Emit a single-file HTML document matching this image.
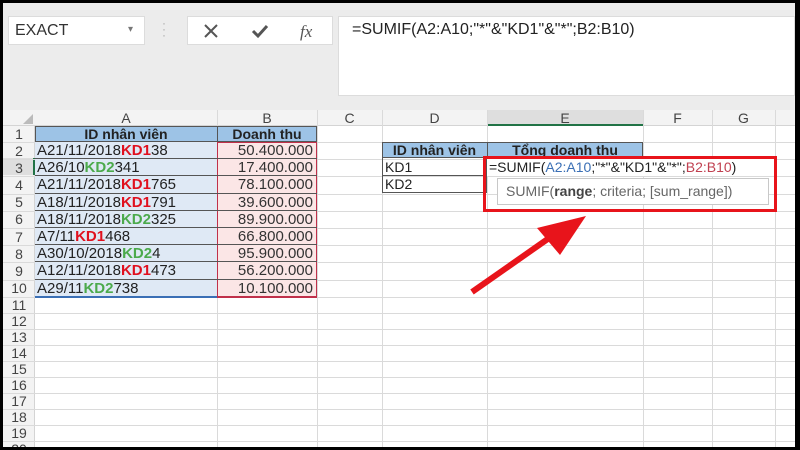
<!DOCTYPE html>
<html><head><meta charset="utf-8"><style>
*{margin:0;padding:0;box-sizing:border-box}
html,body{width:800px;height:450px;overflow:hidden}
body{background:#000;font-family:"Liberation Sans",Arial,sans-serif;position:relative}
#wrap{position:absolute;left:0;top:0;width:800px;height:450px;overflow:hidden}
.a{position:absolute}
.t{position:absolute;font-size:14px;line-height:16px;white-space:nowrap;color:#222}
.r{color:#e0101e;font-weight:bold}.g{color:#4caa4c;font-weight:bold}
</style></head><body><div id="wrap">
<div class="a" style="left:3px;top:3px;width:792px;height:444px;background:#fff"></div>
<div class="a" style="left:3px;top:3px;width:792px;height:107px;background:#ececec"></div>
<div class="a" style="left:8px;top:16px;width:137px;height:29px;background:#fff;border:1px solid #dcdcdc"></div>
<div class="t" style="left:15px;top:23px;font-size:16px;color:#333">EXACT</div>
<div class="t" style="left:128px;top:22px;font-size:10px;color:#777">▾</div>
<div class="t" style="left:162px;top:20px;font-size:12px;color:#aaa;line-height:6px">·<br>·<br>·</div>
<div class="a" style="left:187px;top:16px;width:146px;height:29px;background:#fff;border:1px solid #dcdcdc"></div>
<svg class="a" style="left:200px;top:21px" width="130" height="20"><path d="M5 4 L17 16 M17 4 L5 16" stroke="#555" stroke-width="2"/><path d="M53 10 L58 15 L67 5" stroke="#555" stroke-width="3" fill="none"/><text x="100" y="16" font-family="Liberation Serif" font-style="italic" font-size="17" fill="#555">fx</text></svg>
<div class="a" style="left:338px;top:16px;width:457px;height:80px;background:#fff;border:1px solid #dcdcdc"></div>
<div class="t" style="left:352px;top:22px;font-size:16px;color:#222">=SUMIF(A2:A10;"*"&amp;"KD1"&amp;"*";B2:B10)</div>
<div class="a" style="left:3px;top:110px;width:792px;height:16px;background:#f3f3f3;border-bottom:1px solid #d4d4d4"></div>
<div class="a" style="left:487px;top:110px;width:156px;height:16px;background:#dedede;border-bottom:2px solid #217346"></div>
<svg class="a" style="left:22px;top:113px" width="12" height="12"><path d="M11 1 L11 11 L1 11Z" fill="#bbb"/></svg>
<div id="cols"></div>
<div class="a" style="left:3px;top:126px;width:32px;height:321px;background:#f3f3f3;border-right:1px solid #d4d4d4"></div>
<div class="a" style="left:3px;top:158px;width:32px;height:17px;background:#dedede;border-right:2px solid #217346"></div>
<div id="grid"></div>
<div class="a" style="left:35px;top:126px;width:282px;height:16px;background:#9dc3e6;border:1px solid #555"></div>
<div class="a" style="left:217px;top:126px;width:1px;height:16px;background:#555"></div>
<div class="t" style="left:35px;top:126px;width:182px;text-align:center;font-weight:bold">ID nhân viên</div>
<div class="t" style="left:217px;top:126px;width:100px;text-align:center;font-weight:bold">Doanh thu</div>
<div class="a" style="left:35px;top:142px;width:182px;height:155px;background:#dfe9f5"></div>
<div class="a" style="left:217px;top:142px;width:100px;height:155px;background:#fbe6e6;border:1px solid #c0304a"></div>
<div id="data"></div>
<div class="a" style="left:382px;top:142px;width:261px;height:16px;background:#9dc3e6;border:1px solid #555"></div>
<div class="a" style="left:487px;top:142px;width:1px;height:16px;background:#555"></div>
<div class="t" style="left:382px;top:142px;width:105px;text-align:center;font-weight:bold">ID nhân viên</div>
<div class="t" style="left:487px;top:142px;width:156px;text-align:center;font-weight:bold">Tổng doanh thu</div>
<div class="a" style="left:382px;top:158px;width:105px;height:35px;border:1px solid #555;border-top:none"></div>
<div class="a" style="left:382px;top:175px;width:105px;height:1px;background:#555"></div>
<div class="t" style="left:385px;top:159px">KD1</div>
<div class="t" style="left:385px;top:176px">KD2</div>
<div class="a" style="left:487px;top:158px;width:290px;height:18px;background:#fff"></div>
<div class="t" style="left:489px;top:159px">=SUMIF(<span style="color:#3a6fb5">A2:A10</span>;"*"&amp;"KD1"&amp;"*";<span style="color:#c04050">B2:B10</span>)</div>
<div class="a" style="left:497px;top:178px;width:272px;height:27px;background:#fff;border:1px solid #c8c8c8"></div>
<div class="t" style="left:506px;top:183px;font-size:14px;color:#666">SUMIF(<b style="color:#444">range</b>; criteria; [sum_range])</div>
<div class="a" style="left:483px;top:156px;width:294px;height:56px;border:3px solid #e8141b"></div>
<svg class="a" style="left:0;top:0" width="800" height="450"><path d="M472 292 L552 236" stroke="#e8141b" stroke-width="6"/><path d="M586 216 L537 228 L560 255Z" fill="#e8141b"/></svg>
<div class="a" style="left:0;top:447px;width:800px;height:3px;background:#000"></div>
<div class="a" style="left:795px;top:0;width:5px;height:450px;background:#000"></div>
<div class="a" style="left:0;top:0;width:3px;height:450px;background:#000"></div>
<div class="a" style="left:0;top:0;width:800px;height:3px;background:#000"></div>
</div>
<script>
const cols=[["A",35,217],["B",217,317],["C",317,382],["D",382,487],["E",487,643],["F",643,712],["G",712,775],["",775,800]];
let h="";
for(const[c,x0,x1] of cols){h+=`<div class="a" style="left:${x1}px;top:110px;width:1px;height:337px;background:#dadada"></div><div class="t" style="left:${x0}px;top:110px;width:${x1-x0}px;text-align:center;color:#444">${c}</div>`;}
document.getElementById('cols').innerHTML=h;
let ys=[126,142];for(let i=0;i<9;i++)ys.push(ys[ys.length-1]+17.2);while(ys.length<21)ys.push(ys[ys.length-1]+16);
let g="";
for(let i=0;i<20;i++){const y=ys[i];g+=`<div class="a" style="left:3px;top:${ys[i+1]}px;width:792px;height:1px;background:#dadada"></div><div class="t" style="left:3px;top:${y+(ys[i+1]-y-16)/2}px;width:32px;text-align:center;color:#444;font-size:14px">${i+1}</div>`;}
document.getElementById('grid').innerHTML=g;
const d=[["A21/11/2018","r","KD1","38","50.400.000"],["A26/10","g","KD2","341","17.400.000"],["A21/11/2018","r","KD1","765","78.100.000"],["A18/11/2018","r","KD1","791","39.600.000"],["A18/11/2018","g","KD2","325","89.900.000"],["A7/11","r","KD1","468","66.800.000"],["A30/10/2018","g","KD2","4","95.900.000"],["A12/11/2018","r","KD1","473","56.200.000"],["A29/11","g","KD2","738","10.100.000"]];
let s="";
d.forEach((r,i)=>{const y=ys[i+1],y2=ys[i+2];s+=`<div class="a" style="left:35px;top:${y2-1}px;width:282px;height:1px;background:#555"></div><div class="t" style="left:37px;top:${y+1}px;font-size:15px">${r[0]}<span class="${r[1]}">${r[2]}</span>${r[3]}</div><div class="t" style="left:217px;top:${y+1}px;width:96px;text-align:right;font-size:15px;color:#333">${r[4]}</div>`;});
s+=`<div class="a" style="left:35px;top:${ys[10]-1}px;width:182px;height:2px;background:#3a6fb5"></div><div class="a" style="left:217px;top:${ys[10]-1}px;width:100px;height:2px;background:#c0304a"></div>`;
document.getElementById('data').innerHTML=s;
</script>
</body></html>
